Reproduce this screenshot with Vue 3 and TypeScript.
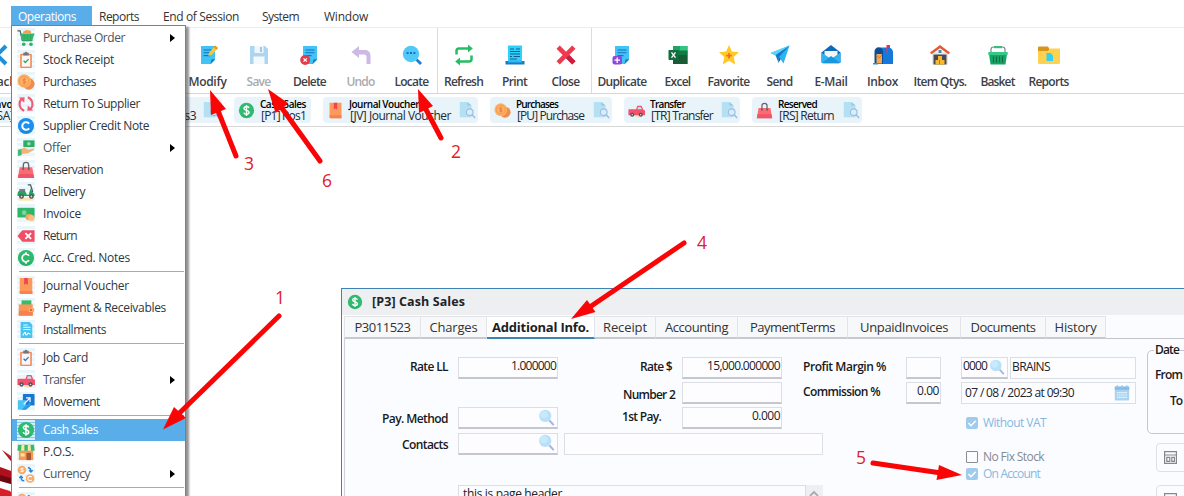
<script setup lang="ts">
import type { Directive } from 'vue'

// Tunes letter spacing so that a label takes the given width in pixels.
const vFit: Directive<HTMLElement, number | undefined> = {
  mounted(el, { value }) {
    const count = (el.textContent ?? '').trim().length
    if (!value || !count) return
    const range = document.createRange()
    range.selectNodeContents(el)
    el.style.letterSpacing = `${(value - range.getBoundingClientRect().width) / count}px`
  },
}

const clipboard = (tick: string) => `<rect x="3.5" y="3" width="13" height="16" rx="1.2" fill="#f28a55"/><rect x="5.3" y="4.8" width="9.4" height="12.6" fill="#fbf7f5"/><path d="M7 2h1.5a1.6 1.6 0 0 1 3 0H13v3H7z" fill="#72777f"/><path d="M7.3 10.8l2 2 3.6-3.8" fill="none" stroke="${tick}" stroke-width="1.4"/>`
const coin = (mark: string, body: string) => `<circle cx="10" cy="10" r="9" fill="${body}"/><path d="M3 15a9 9 0 0 0 14 0" fill="#000" opacity=".06"/>${mark}`
const dollar = `<path d="M13 7.2C12.600 5.900 11.400 5.400 10 5.400C8.300 5.400 7.100 6.200 7.100 7.600C7.100 10.500 13 9.100 13 12.200C13 13.700 11.700 14.500 10 14.500C8.300 14.500 7.200 13.700 6.900 12.400M10 3.600V16.400" fill="none" stroke="#fff" stroke-width="1.700"/>`
const note = `<path d="M3 1h14v14l-4 4H3z" fill="#43c3f5"/><path d="M12.500 19l1-4.500L17 14z" fill="#1573c4"/><path d="M5.500 5h9M5.500 7.800h9M5.500 10.600h6" stroke="#1573c4" stroke-width="1.100"/>`
const coins = `<circle cx="13" cy="12" r="6.500" fill="#f08c4c"/><circle cx="8" cy="9" r="7.500" fill="#ffb367"/><circle cx="8" cy="9" r="5.300" fill="none" stroke="#f0914e"/><path d="M9.800 7.300c-.8-1-3.400-.8-3.400.6 0 1.600 3.500.8 3.500 2.400 0 1.500-2.700 1.500-3.600.3M8 5.500v7" fill="none" stroke="#e67c3a"/>`
const truck = `<circle cx="12" cy="13" r="5.500" fill="#ffe3b5"/><path d="M1 8.500h8.500L11 4.500h5l2 4.500 2 1v5.500H.5V9.500z" fill="#f4516c"/><path d="M11 8.500l1-2.700h3l1.300 2.700z" fill="#bfe6fa"/><circle cx="5" cy="15" r="2.400" fill="#50505c"/><circle cx="15" cy="15" r="2.400" fill="#50505c"/><circle cx="5" cy="15" r=".9" fill="#ddd"/><circle cx="15" cy="15" r=".9" fill="#ddd"/>`
const bag = `<path d="M3 7h14l2 12H1z" fill="#fb6b70"/><path d="M1.800 14.500h16.400l.8 4.500H1z" fill="#ee5569"/><path d="M7 9V4.500a3 3 0 0 1 6 0V9" fill="none" stroke="#6a6470" stroke-width="1.500"/><circle cx="7" cy="9" r="1.200" fill="#6a6470"/><circle cx="13" cy="9" r="1.200" fill="#6a6470"/>`
const book = `<path d="M3 1h14v18H4.500A1.500 1.500 0 0 1 3 17.500z" fill="#fd9a5a"/><path d="M3 15.500h14V19H4.500A1.500 1.500 0 0 1 3 17.500z" fill="#f8814f"/><path d="M8 1h4v8l-2-1.700L8 9z" fill="#ee4257"/>`

const icons: Record<string, string> = {
  cart: `<path d="M.5 2h3l2.500 11h11" fill="none" stroke="#4a5662" stroke-width="1.300"/><path d="M3.500 5h16l-2.500 8H5.500z" fill="#35b86b"/><path d="M6.500 3l4-2 5 1v3H7z" fill="#ef9f57"/><path d="M8 6.500v5M11.500 6.500v5M15 6.500v5" stroke="#2aa35b" stroke-width=".8"/><circle cx="7.500" cy="17" r="2" fill="#2eb364"/><circle cx="15.500" cy="17" r="2" fill="#2eb364"/>`,
  receipt: clipboard('#27a567'),
  job: clipboard('#2678e5'),
  coins,
  swap: `<path d="M8 17.500A8 8 0 0 1 5 4.500M12 2.500a8 8 0 0 1 3 13" fill="none" stroke="#f05d72" stroke-width="2.300"/><path d="M2 2.800l6.500-.3-.5 6zM18 17.300l-6.500.3.5-6z" fill="#f05d72"/>`,
  creditBlue: coin('<path d="M13.500 7.300a4.300 4.300 0 1 0 0 5.400" fill="none" stroke="#fff" stroke-width="2.200"/>', '#1c8ff0'),
  creditGreen: coin('<path d="M13.300 7.500a4.200 4.200 0 1 0 0 5M10 3.500v3M10 13.500v3" fill="none" stroke="#fff" stroke-width="1.900"/>', '#2dba6c'),
  dollar: coin(dollar, '#30bb70'),
  offer: `<path d="M7 1.500h12.500V9H7z" fill="#2dae66"/><circle cx="13.200" cy="5.200" r="2" fill="#95dfb0"/><path d="M4.500 11l4-1.500 4 2.500 6-1.500c1 .6.500 1.400 0 1.700L12 16l-5 .5-2.500 1z" fill="#f5b377"/><path d="M1 12l4-1v7l-4 1z" fill="#44b972"/>`,
  bag,
  scooter: `<path d="M12 2h3l2.500 8" fill="none" stroke="#4a5662" stroke-width="1.400"/><path d="M2 18h16" stroke="#ffe2a8" stroke-width="3"/><path d="M2 9h7l2 4h2l2-7 3 5c1.200.4 1.700 2 1.500 3.500H.5C.5 11.500 1 10 2 9z" fill="#27a25c"/><path d="M2.500 6.800H9v2H2.500z" fill="#65717b"/><circle cx="5" cy="15" r="2.600" fill="#49505a"/><circle cx="16" cy="15" r="2.600" fill="#49505a"/><circle cx="5" cy="15" r="1" fill="#ddd"/><circle cx="16" cy="15" r="1" fill="#ddd"/>`,
  invoice: `<rect x=".5" y="3" width="19" height="11" rx="1" fill="#2fb66b"/><circle cx="8" cy="8.500" r="2.600" fill="#7bd69c"/><ellipse cx="13.500" cy="13.500" rx="4.200" ry="3.400" fill="#f5a55f"/><ellipse cx="16" cy="14.500" rx="3.500" ry="3.300" fill="#ffbf80"/>`,
  back: `<path d="M6 3.500h13.500v13H6L.5 10z" fill="#f34d66"/><path d="M9.300 6.800l6.400 6.400M15.700 6.800l-6.400 6.400" stroke="#fff" stroke-width="2"/>`,
  book,
  wallet: `<path d="M5 1.500h11V8H5z" fill="#35bd6d"/><path d="M2 6h15.500v12.500H2z" fill="#fd9654"/><path d="M2 13h15.500v5.500H2z" fill="#f6824b"/><path d="M13 10h6v4.500h-6z" fill="#ffac70"/><circle cx="15.500" cy="12.200" r="1" fill="#b25224"/>`,
  install: `<path d="M4 1h10l3 3v15H4z" fill="#46c3f0"/><path d="M7 4.500h5M7 7h8M7 9.500h8" stroke="#fff"/><path d="M6.500 16c2-4 3-4 3-2s2 2 2.500 0 1.500 1 3 .500" fill="none" stroke="#fff" stroke-width="1.200"/>`,
  truck,
  move: `<rect x="6.500" y="1" width="13" height="13" rx="1" fill="#1976d2"/><path d="M1 8h9v10.500H1z" fill="#49c4f4"/><path d="M5 18.500l10-9v5l-5 4z" fill="#2a9be6"/><path d="M7.500 12.500l6.500-6.500M10 5.500h4.500V10" fill="none" stroke="#fff" stroke-width="1.300"/>`,
  store: `<path d="M2 8h16v11H2z" fill="#f49a54"/><path d="M10.500 11h5v8h-5z" fill="#a7562f"/><path d="M4 11.500h4.500v3.500H4z" fill="#ffe0aa"/><path d="M1 2h18l.500 6.500h-19z" fill="#35bb69"/><path d="M5 2h3.200v6.500H4.500zM12 2h3l.600 6.500H12z" fill="#ffe4a2"/>`,
  currency: `<circle cx="5.500" cy="5.500" r="4.800" fill="#fbaa65"/><circle cx="14.500" cy="15" r="4.800" fill="#fbaa65"/><path d="M7.200 4c-1-.800-3-.500-2.800.700.200 1 2.500.6 2.600 1.800 0 1.200-2 1.300-2.900.3M16.300 13.500a2.400 2.400 0 1 0 0 3" fill="none" stroke="#fff" stroke-width="1.200"/><path d="M12 3c2.500 0 3.500 1 3.500 4M13.500 5.800l2 2 2-2M8 17.500c-2.500 0-3.500-1-3.500-4M2.500 14.500l2-2 2 2" fill="none" stroke="#2683da" stroke-width="1.500"/>`,
  prev: `<path d="M16 1L7 10l9 9" fill="none" stroke="#1d91d8" stroke-width="4"/>`,
  modify: `${note}<path d="M11 8L17 .500l3 2.500-6.500 7-3.300.800z" fill="#ffc531"/><path d="M17 .500l3 2.500-1.500 1.800-3-2.600z" fill="#e49b16"/>`,
  save: `<path d="M1 1h15l3 3v15H1z" fill="#aed5ef"/><path d="M5.500 1h9v7h-9z" fill="#eef7fc"/><path d="M11 2h2v5h-2z" fill="#a3c8e1"/><path d="M4.500 11.500h11V19h-11z" fill="#f4f9fc"/>`,
  remove: `${note}<circle cx="5.200" cy="15" r="5" fill="#e63b49"/><path d="M3.500 13.300l3.400 3.400M6.900 13.300l-3.400 3.400" stroke="#fff" stroke-width="1.200"/>`,
  undo: `<path d="M.5 7L8 1v4h6c3.500 0 5.500 2.500 5.500 6v8h-4v-7c0-1.700-.8-2.600-2.500-2.600H8V13z" fill="#cdb9e6"/>`,
  locate: `<path d="M14.500 14.500l4.500 4.500" stroke="#1c7fd0" stroke-width="2.800"/><circle cx="9" cy="9" r="8.200" fill="#51c9f8"/><path d="M4.600 8h2M8 8h2M11.400 8h2" stroke="#1572b9" stroke-width="2"/>`,
  refresh: `<path d="M2.500 9.500V6c0-1.700.8-2.500 2.500-2.500h10M17.500 10.500V14c0 1.700-.8 2.500-2.500 2.500H5" fill="none" stroke="#25bd63" stroke-width="2.500"/><path d="M14-.5l4.800 4-4.800 4zM6 12.500l-4.800 4 4.800 4z" fill="#25bd63"/>`,
  print: `<path d="M3 .5h14V17H3z" fill="#2bd3fa"/><path d="M.5 16h19v3.500H.5z" fill="#1878c9"/><path d="M3 15.500h14v2H3z" fill="#2bb9ef"/><path d="M5 4h4M11 4h4M5 6.500h10M5 9h10M5 11.500h2M8.500 11.500H15M5 14h7" stroke="#19588f" stroke-width="1.100"/>`,
  close: `<path d="M3.800.500L10 6.800l6.200-6.300 3.300 3.300L13.300 10l6.200 6.200-3.300 3.300L10 13.200l-6.200 6.300-3.300-3.300L6.700 10 .500 3.800z" fill="#ee3a4c"/><path d="M13.300 10l6.200 6.200-3.300 3.300L10 13.200z" fill="#c91f3f"/>`,
  duplicate: `${note}<rect x=".5" y="11" width="9.500" height="8.500" rx="2" fill="#8d48dd"/><path d="M5.200 12.500v5.500M2.500 15.200H8" stroke="#fff" stroke-width="1.300"/>`,
  excel: `<rect x="5" y="1" width="14.500" height="18" fill="#21a366"/><path d="M5 10h14.500v9H5z" fill="#185c37"/><path d="M12 1h7.500v9H12z" fill="#33c481"/><path d="M5 5.500h14.500V10H5z" fill="#107c41"/><rect x=".5" y="5" width="10" height="10" rx=".8" fill="#0e703c"/><path d="M3.500 7.300l4 5.400M7.500 7.300l-4 5.400" stroke="#fff" stroke-width="1.300"/>`,
  star: `<path d="M10 0l2.900 6.500 7.100.800-5.300 4.800L16.200 19.500 10 15.700 3.800 19.500l1.500-7.400L0 7.300l7.100-.800z" fill="#ffc928"/><path d="M10 8v5.500M7.200 10.700h5.600" stroke="#f0702a" stroke-width="1.700"/>`,
  send: `<path d="M.5 8L19.500.5l-6 18L9 12z" fill="#27b6f2"/><path d="M19.500.5L9 12l-.5 6-3-8z" fill="#1779c5"/><path d="M19.500.5L5.500 10 .5 8z" fill="#5bd3fb"/><path d="M8.500 18l2.200-4L9 12z" fill="#0e5f9e"/>`,
  mail: `<path d="M.5 7.500L10 0l9.500 7.500v10.200H.500z" fill="#0f68bb"/><path d="M3.500 6h13v7.500h-13z" fill="#f3f8fc"/><path d="M.5 7.500L10 14l9.500-6.500v9.200a1.800 1.800 0 0 1-1.800 1.800H2.300A1.800 1.800 0 0 1 .5 16.700z" fill="#31b3f0"/><path d="M1 18l9-7 9 7z" fill="#1b95de"/>`,
  inbox: `<path d="M4 2.500h11c3 0 5 2 5 5V19H4z" fill="#1579dc"/><path d="M1.500 19V7c0-3 1.500-4.500 4.200-4.500S10 4 10 7v12z" fill="#0b4e93"/><path d="M3.500 9H9v9.500H3.500z" fill="#f7a84e"/><path d="M3.500 10l2.700 3L9 10" fill="none" stroke="#d7792a"/><path d="M13.500 9V0H17v3h-2v6z" fill="#e33550"/><path d="M0 18h5v1.500H0z" fill="#2691e5"/>`,
  warehouse: `<path d="M2 7h16v12.500H2z" fill="#e9e9ec"/><path d="M3.500 9.500h13v10h-13z" fill="#484b55"/><path d="M0 7.500L10 0l10 7.500-1.500 1.800L10 3.200 1.500 9.300z" fill="#e35b32"/><path d="M8.500 5h3v3h-3z" fill="#4286bb"/><path d="M5.500 15h4v4.500h-4zM10 15h4.500v4.500H10zM8 11h4v4H8z" fill="#f9b929"/>`,
  basket: `<path d="M3 9V4.500C3 3 3.800 2 5.500 2h9C16.200 2 17 3 17 4.500V9" fill="none" stroke="#7d8792" stroke-width="1.200"/><path d="M6 1h8v2.200H6z" fill="#37bf7b"/><path d="M1 9h18l-1.500 10.500h-15z" fill="#17a565"/><path d="M.3 7h19.400v3H.3z" fill="#35c985"/><path d="M5.500 11.500v6M8.500 11.500v6M11.500 11.500v6M14.500 11.500v6" stroke="#0b6d41" stroke-width="1.100"/>`,
  folder: `<path d="M-1 2.500a1 1 0 0 1 1-1h9L10.500 4v3H-1z" fill="#d8951b"/><path d="M-1 6H9l2-2.500h10v14a1.500 1.500 0 0 1-1.500 1.500h-19A1.500 1.500 0 0 1-1 17.500z" fill="#ffd151"/><path d="M7.500 8h4l2.500 2.500V16H7.500z" fill="#35cff0"/>`,
  preview: `<path d="M2 1h8.500L15 5v13H2z" fill="#b5e0f4"/><path d="M10.500 1L15 5h-4.500z" fill="#8ecbea"/><circle cx="13" cy="12.500" r="3.700" fill="#dcedf8" stroke="#98bfe3" stroke-width="1.300"/><path d="M15.700 15.300l3.300 3.700" stroke="#98bfe3" stroke-width="1.700"/>`,
  lens: `<path d="M13 13l5.500 6" stroke="#a2b8e6" stroke-width="2.400"/><circle cx="8.500" cy="8" r="7.200" fill="#b8e0f8"/><circle cx="7" cy="6.500" r="4.500" fill="#c8e9fb"/>`,
  calendar: `<rect x="1" y="2" width="18" height="17.500" rx="1" fill="#a9d3f1"/><path d="M1 2h18v4H1z" fill="#86bde8"/><path d="M4 0v4M10 0v4M16 0v4" stroke="#8fc3ea" stroke-width="1.200"/><path d="M4 9.500h12M4 12.500h12M4 15.500h12" stroke="#fff" stroke-width="1.400" stroke-dasharray="1.500 1.100"/>`,
}

interface MenuRow { icon?: string; text?: string; w?: number; sub?: boolean; active?: boolean }
const menu: MenuRow[] = [
  { icon: 'cart', text: 'Purchase Order', w: 82, sub: true },
  { icon: 'receipt', text: 'Stock Receipt', w: 71 },
  { icon: 'coins', text: 'Purchases', w: 53 },
  { icon: 'swap', text: 'Return To Supplier', w: 97 },
  { icon: 'creditBlue', text: 'Supplier Credit Note', w: 106 },
  { icon: 'offer', text: 'Offer', w: 28, sub: true },
  { icon: 'bag', text: 'Reservation', w: 60 },
  { icon: 'scooter', text: 'Delivery', w: 42 },
  { icon: 'invoice', text: 'Invoice', w: 38 },
  { icon: 'back', text: 'Return', w: 34 },
  { icon: 'creditGreen', text: 'Acc. Cred. Notes', w: 87 },
  {},
  { icon: 'book', text: 'Journal Voucher', w: 86 },
  { icon: 'wallet', text: 'Payment & Receivables', w: 123 },
  { icon: 'install', text: 'Installments', w: 63 },
  {},
  { icon: 'job', text: 'Job Card', w: 45 },
  { icon: 'truck', text: 'Transfer', w: 42, sub: true },
  { icon: 'move', text: 'Movement', w: 57 },
  {},
  { icon: 'dollar', text: 'Cash Sales', w: 55, active: true },
  { icon: 'store', text: 'P.O.S.', w: 31 },
  { icon: 'currency', text: 'Currency', w: 47, sub: true },
  {},
  { icon: 'currency', text: '' },
]

interface Tool { icon: string; text: string; w: number; cell: number; off?: boolean }
const toolGroups: Tool[][] = [
  [
    { icon: 'modify', text: 'Modify', w: 38, cell: 51 },
    { icon: 'save', text: 'Save', w: 24, cell: 51, off: true },
    { icon: 'remove', text: 'Delete', w: 33, cell: 51 },
    { icon: 'undo', text: 'Undo', w: 28, cell: 51, off: true },
    { icon: 'locate', text: 'Locate', w: 34, cell: 51 },
  ],
  [
    { icon: 'refresh', text: 'Refresh', w: 39, cell: 51 },
    { icon: 'print', text: 'Print', w: 25, cell: 51 },
    { icon: 'close', text: 'Close', w: 28, cell: 51 },
  ],
  [
    { icon: 'duplicate', text: 'Duplicate', w: 49, cell: 60 },
    { icon: 'excel', text: 'Excel', w: 26, cell: 51 },
    { icon: 'star', text: 'Favorite', w: 42, cell: 51 },
    { icon: 'send', text: 'Send', w: 26, cell: 51 },
    { icon: 'mail', text: 'E-Mail', w: 33, cell: 52 },
    { icon: 'inbox', text: 'Inbox', w: 31, cell: 51 },
    { icon: 'warehouse', text: 'Item Qtys.', w: 53, cell: 64 },
    { icon: 'basket', text: 'Basket', w: 34, cell: 51 },
    { icon: 'folder', text: 'Reports', w: 40, cell: 51 },
  ],
]

const chips = [
  { icon: 'invoice', title: 'Invoice', tw: 34, text: '[SA] Invoice', w: 60, cell: 144, look: true },
  { icon: 'dollar', title: 'Cash', tw: 20, text: '[P3] Pos3', w: 47, cell: 100, look: true },
  { icon: 'dollar', title: 'Cash Sales', tw: 46, text: '[P1] Pos1', w: 45, cell: 77, look: false },
  { icon: 'book', title: 'Journal Voucher', tw: 70, text: '[JV] Journal Voucher', w: 101, cell: 155, look: true },
  { icon: 'coins', title: 'Purchases', tw: 42, text: '[PU] Purchase', w: 67, cell: 122, look: true },
  { icon: 'truck', title: 'Transfer', tw: 35, text: '[TR] Transfer', w: 62, cell: 116, look: true },
  { icon: 'bag', title: 'Reserved', tw: 39, text: '[RS] Return', w: 55, cell: 110, look: true },
]

const tabs = [
  { text: 'P3011523', w: 56, cell: 77 },
  { text: 'Charges', w: 48, cell: 66 },
  { text: 'Additional Info.', w: 97, cell: 108, active: true },
  { text: 'Receipt', w: 44, cell: 61 },
  { text: 'Accounting', w: 63, cell: 82 },
  { text: 'PaymentTerms', w: 85, cell: 110 },
  { text: 'UnpaidInvoices', w: 88, cell: 113 },
  { text: 'Documents', w: 65, cell: 85 },
  { text: 'History', w: 42, cell: 60 },
]

const top = [
  { text: 'Operations', w: 58, cell: 81, active: true },
  { text: 'Reports', w: 40, cell: 64 },
  { text: 'End of Session', w: 76, cell: 99 },
  { text: 'System', w: 37, cell: 62 },
  { text: 'Window', w: 44, cell: 60 },
]

// Callout arrows: tail, tip and the two barbs of the head.
const arrows = [
  { n: '1', x: 275, y: 304, tail: [279, 316], tip: [163, 429.5], a: [174, 407], b: [186, 418] },
  { n: '2', x: 451, y: 158, tail: [441, 138], tip: [418, 89], a: [419, 113], b: [433, 106] },
  { n: '3', x: 244, y: 170, tail: [236, 156], tip: [210, 90], a: [211, 115], b: [226, 109] },
  { n: '4', x: 697, y: 249, tail: [684, 243], tip: [571, 319], a: [587, 300], b: [595.5, 312] },
  { n: '5', x: 856, y: 464, tail: [873, 463], tip: [962, 475], a: [939, 465], b: [936.5, 480] },
  { n: '6', x: 322, y: 187, tail: [320, 161], tip: [268, 89], a: [275.5, 113], b: [288.500, 103.500] },
]
</script>

<template>
  <div class="app">
    <nav class="menubar">
      <span v-for="t in top" :key="t.text" class="top" :class="{ active: t.active }" :style="{ width: t.cell + 'px' }">
        <span v-fit="t.w">{{ t.text }}</span>
      </span>
    </nav>

    <div class="toolbar">
      <div class="tool first">
        <svg viewBox="0 0 20 20" v-html="icons.prev" />
        <span v-fit="27">Back</span>
      </div>
      <div v-for="(g, i) in toolGroups" :key="i" class="group">
        <div v-for="t in g" :key="t.text" class="tool" :class="{ off: t.off }" :style="{ width: t.cell + 'px' }">
          <svg viewBox="0 0 20 20" v-html="icons[t.icon]" />
          <span v-fit="t.w">{{ t.text }}</span>
        </div>
      </div>
    </div>

    <div class="chips">
      <div v-for="c in chips" :key="c.text" class="chip" :style="{ width: c.cell + 'px' }">
        <svg viewBox="0 0 20 20" v-html="icons[c.icon]" />
        <div class="chip-text">
          <b><span v-fit="c.tw">{{ c.title }}</span></b>
          <div><span v-fit="c.w">{{ c.text }}</span></div>
        </div>
        <svg v-if="c.look" class="look" viewBox="0 0 20 20" v-html="icons.preview" />
      </div>
    </div>

    <main class="desk">
      <svg class="mascot" viewBox="0 0 14 50" width="14" height="50">
        <path d="M2 4l12 8v7z" fill="#a81220" />
        <path d="M3 4l11 10v1z" fill="#e0606a" />
        <path d="M0 21l14 5v10L0 32z" fill="#b0101d" />
        <path d="M0 29l14 4v6L0 35z" fill="#6d0710" />
        <path d="M0 42l10 3 4 5H0z" fill="#d8202d" />
      </svg>
      <section class="window">
        <header>
          <svg viewBox="0 0 20 20" v-html="icons.dollar" />
          <span v-fit="93">[P3] Cash Sales</span>
        </header>
        <div class="tabs">
          <div v-for="t in tabs" :key="t.text" class="tab" :class="{ active: t.active }" :style="{ width: t.cell + 'px' }">
            <span v-fit="t.w">{{ t.text }}</span>
          </div>
          <div class="rest" />
        </div>
        <div class="body">
          <div class="left">
            <div class="grid">
              <label class="c1 r1"><span v-fit="38">Rate LL</span></label>
              <div class="field c2 r1"><span v-fit="45">1.000000</span></div>
              <label class="c1 r3 low"><span v-fit="66">Pay. Method</span></label>
              <div class="field c2 r3"><svg viewBox="0 0 20 20" v-html="icons.lens" /></div>
              <label class="c1 r4 low"><span v-fit="46">Contacts</span></label>
              <div class="field c2 r4"><svg viewBox="0 0 20 20" v-html="icons.lens" /></div>
              <label class="c3 r1"><span v-fit="32">Rate $</span></label>
              <div class="field c4 r1"><span v-fit="73">15,000.000000</span></div>
              <label class="c3 r2 number"><span v-fit="52">Number 2</span></label>
              <div class="field c4 r2" />
              <label class="c3 r3 pay"><span v-fit="39">1st Pay.</span></label>
              <div class="field c4 r3"><span v-fit="28">0.000</span></div>
              <label class="c5 r1 start"><span v-fit="83">Profit Margin %</span></label>
              <div class="field c6 r1" />
              <label class="c5 r2 start"><span v-fit="77">Commission %</span></label>
              <div class="field c6 r2"><span v-fit="22">0.00</span></div>
              <div class="field flat wide r4" />
            </div>
            <div class="memo">
              <div class="memo-text"><span v-fit="99">this is page header</span></div>
              <div class="scroll"><svg viewBox="0 0 10 8" width="10" height="8"><path d="M1 6l4-4 4 4" fill="none" stroke="#aaa" stroke-width="1.800" /></svg></div>
            </div>
          </div>

          <div class="side">
            <div class="row">
              <div class="field code"><span v-fit="24">0000</span><svg viewBox="0 0 20 20" v-html="icons.lens" /></div>
              <div class="field flat name"><span v-fit="38">BRAINS</span></div>
            </div>
            <div class="field flat date"><span v-fit="109">07 / 08 / 2023 at 09:30</span><svg viewBox="0 0 20 20" v-html="icons.calendar" /></div>
            <div class="check on vat"><i><svg viewBox="0 0 12 12"><path d="M2.500 6l2.500 2.700 4.700-5" /></svg></i><span v-fit="63">Without VAT</span></div>
            <div class="check fix"><i /><span v-fit="61">No Fix Stock</span></div>
            <div class="check on acc"><i><svg viewBox="0 0 12 12"><path d="M2.500 6l2.500 2.700 4.700-5" /></svg></i><span v-fit="57">On Account</span></div>
          </div>

          <div class="range">
            <fieldset>
              <legend><span v-fit="24">Date</span></legend>
              <p><span v-fit="27">From</span></p>
              <p class="to"><span v-fit="12">To</span></p>
            </fieldset>
            <div v-for="k in 2" :key="k" class="btn">
              <svg viewBox="0 0 13 13" width="13" height="13"><path d="M.600.600h11.800v11.800H.600zM.600 4h11.800M2.800 6.300h3v4h-3zM7.800 6.300h2.600v4H7.800z" /></svg>
              <span>C</span>
            </div>
          </div>
        </div>
      </section>
    </main>

    <div class="menu">
      <template v-for="(m, i) in menu" :key="i">
        <div v-if="!m.icon" class="sep" />
        <div v-else class="item" :class="{ active: m.active, sub: m.sub }">
          <span class="pic"><svg viewBox="0 0 20 20" v-html="icons[m.icon]" /></span>
          <span v-fit="m.w">{{ m.text }}</span>
          <i v-if="m.sub" />
        </div>
      </template>
    </div>

    <svg class="callouts" width="1184" height="496" viewBox="0 0 1184 496">
      <g v-for="a in arrows" :key="a.n">
        <line :x1="a.tail[0]" :y1="a.tail[1]" :x2="(a.a[0] + a.b[0]) / 2" :y2="(a.a[1] + a.b[1]) / 2" />
        <polygon :points="`${a.tip} ${a.a} ${a.b}`" />
        <text :x="a.x" :y="a.y">{{ a.n }}</text>
      </g>
    </svg>
  </div>
</template>

<style>
body { margin: 0; background: #fff; }
</style>

<style scoped>
.app {
  position: relative;
  width: 1184px;
  height: 496px;
  overflow: hidden;
  background: #fff;
  color: #222;
  font: 12px/16px 'Open Sans', 'Noto Sans', sans-serif;
  white-space: nowrap;
  display: flex;
  flex-direction: column;
}
.app * { box-sizing: border-box; }
svg { display: block; flex: none; overflow: visible; }

.menubar {
  flex: none;
  height: 28px;
  padding: 6px 0 0 11px;
  display: flex;
  border-bottom: 1px solid #efe9ee;
}
.top { height: 22px; padding: 3px 0 0 7px; color: #333; }
.top.active { background: #59aeea; color: #fff; }

.toolbar {
  flex: none;
  height: 66px;
  display: flex;
  border-bottom: 1px solid #d7d7d7;
}
.tool {
  display: flex;
  flex-direction: column;
  align-items: center;
  padding-top: 17px;
  font-weight: 600;
  color: #3d4147;
}
.tool svg { width: 20px; height: 20px; margin-bottom: 9px; }
.tool.first { width: 51px; margin: 0 154px 0 -23px; }
.tool.first svg { margin-left: -6px; }
.tool.off { color: #a9abae; }
.group { display: flex; }
.group + .group { border-left: 1px solid #dcdcdc; }

.chips {
  flex: none;
  height: 33px;
  padding-top: 3px;
  display: flex;
  gap: 12px;
  border-bottom: 1px solid #d7d7d7;
}
.chip {
  flex: none;
  height: 26px;
  border-radius: 4px;
  background: #e9f3fa;
  display: flex;
  align-items: center;
  padding: 0 2px 0 4px;
}
.chip:first-child { margin-left: -34px; }
.chip svg { width: 17px; height: 17px; }
.chip-text { margin-left: 5px; flex: 1; line-height: 12px; color: #26292e; }
.chip-text b { display: block; font-size: 10px; line-height: 12px; font-weight: 600; color: #000; }
.chip-text div { padding-left: 1px; font-size: 12px; }
.chip .look { width: 18px; height: 18px; }

.desk { flex: 1; min-height: 0; position: relative; padding: 161px 0 0 341px; }
.mascot { position: absolute; left: 0; bottom: 0; }

.window {
  width: 900px;
  height: 300px;
  border: 1px solid #3f82b4;
  border-right: 0;
  background: #fbfcff;
}
.window header {
  height: 26px;
  background: #eeeff0;
  display: flex;
  align-items: center;
  padding-left: 5px;
  font-size: 12.5px;
  font-weight: 700;
  color: #20242a;
}
.window header svg { width: 16px; height: 16px; margin-right: 9px; }

.tabs {
  height: 23px;
  margin: 1px 0 0 2px;
  display: flex;
  font-size: 13px;
  color: #333;
}
.tab {
  flex: none;
  text-align: center;
  padding-top: 2px;
  border: 1px solid #e3e4ea;
  border-left: 0;
  border-bottom: 2px solid #c8c9cf;
  background: #f7f8fa;
}
.tab:first-child { border-left: 1px solid #e3e4ea; }
.tab.active { background: #fff; font-weight: 700; color: #1b1e22; border-bottom-color: #3d84b4; }
.rest { flex: 1; border-bottom: 1px solid #c3c4ca; }

.body {
  margin-left: 2px;
  height: 240px;
  border-left: 1px solid #cfd0d8;
  display: flex;
}
.left { width: 616px; padding-top: 18px; }
.grid {
  display: grid;
  grid-template-columns: 113px 100px 124px 100px 124px 35px;
  grid-template-rows: repeat(4, 22px);
  row-gap: 3.200px;
}
.c1 { grid-column: 1; }
.c2 { grid-column: 2; }
.c3 { grid-column: 3; }
.c4 { grid-column: 4; }
.c5 { grid-column: 5; }
.c6 { grid-column: 6; }
.r1 { grid-row: 1; }
.r2 { grid-row: 2; }
.r3 { grid-row: 3; }
.r4 { grid-row: 4; }
.wide { grid-column: 3 / 6; margin: 0 83px 0 6px; }
label { text-align: right; padding: 2px 10px 0 0; font-weight: 600; color: #17191c; }
label.low { padding-top: 4px; }
label.number { padding: 5px 7px 0 0; }
label.pay { padding-right: 21px; }
label.start { text-align: left; padding-left: 21px; }
.field {
  border: 1px solid #dddee4;
  border-bottom: 2px solid #c6c7ce;
  background: #fdfdff;
  display: flex;
  align-items: center;
  justify-content: flex-end;
  padding: 0 1px 3px 0;
  color: #202327;
  font-size: 12px;
}
.field.flat { border-bottom: 1px solid #dddee4; }
.field svg { width: 17px; height: 17px; margin: 2px 1px 0 0; }

.memo { margin: 30px 0 0 113px; display: flex; width: 365px; height: 60px; }
.memo-text { width: 348px; border: 1px solid #dddee4; padding-left: 4px; }
.scroll { width: 17px; background: #eeeff1; padding: 5px 3px; }

.side { width: 175px; padding-top: 18px; }
.row { display: flex; gap: 2px; }
.side .field { height: 22px; justify-content: flex-start; padding-left: 1px; }
.side .code { width: 47px; }
.side .code svg { margin-left: 2px; width: 16px; height: 16px; }
.side .name { width: 126px; }
.side .date { margin-top: 3px; padding-left: 3px; justify-content: space-between; padding-right: 3px; padding-bottom: 0; }
.side .date svg { width: 16px; height: 16px; margin: 0 2px 0 0; }
.check { display: flex; align-items: center; height: 16px; padding-left: 5px; color: #85898f; }
.check i { width: 12px; height: 12px; margin-right: 5px; border: 1px solid #898d94; border-radius: 1px; }
.check.on { color: #86b8df; }
.check.on i { background: #9fcbed; border: 0; border-radius: 2px; }
.check path { fill: none; stroke: #fff; stroke-width: 1.500; }
.vat { margin-top: 11px; }
.fix { margin-top: 18px; }
.acc { margin-top: 1px; }

.range { width: 90px; padding: 3px 0 0 11px; }
fieldset {
  margin: 0;
  height: 92px;
  border: 1px solid #c5c7cf;
  border-radius: 5px;
  padding: 0 0 0 7px;
  font-weight: 600;
  color: #17191c;
}
legend { padding: 0 1px; margin-left: -1px; }
fieldset p { margin: 9px 0 0; }
fieldset p.to { margin: 10px 0 0 15px; }
.btn {
  height: 29px;
  margin: 9px 0 13px 9px;
  border: 1px solid #dfe0e6;
  border-radius: 4px;
  padding: 7px;
  display: flex;
  gap: 8px;
  color: #dcc9b5;
}
.btn path { fill: none; stroke: #85878c; stroke-width: 1.200; }

.menu {
  position: absolute;
  left: 11px;
  top: 25px;
  width: 175px;
  height: 480px;
  background: #fff;
  border: 1px solid #7d7f83;
  box-shadow: 3px 2px 2px rgba(0, 0, 0, 0.42);
  padding-top: 1px;
  color: #2b3742;
}
.item { height: 22px; display: flex; align-items: center; padding-left: 5px; }
.item.sub { color: #4c545c; }
.item.active { background: #59aeea; color: #fff; }
.pic {
  width: 18px;
  height: 20px;
  margin-right: 8px;
  padding-top: 1px;
  background: repeating-linear-gradient(#e8f6fc 0 3px, #f6fcff 3px 5px);
}
.pic svg { width: 18px; height: 18px; }
.item.active .pic { background: repeating-linear-gradient(#d7f0fa 0 2px, #8bc9f0 2px 3px); }
.item i { margin-left: auto; margin-right: 10px; border: 4px solid transparent; border-left: 5px solid #000; border-right: 0; }
.sep { height: 1px; margin: 2px 1px 3px 7px; background: #a9a9ad; }

.callouts { position: absolute; left: 0; top: 0; }
.callouts line { stroke: #f90505; stroke-width: 5; stroke-linecap: round; }
.callouts polygon { fill: #f90505; }
.callouts text { fill: #e02028; font: 400 17.5px 'Open Sans', 'Noto Sans', sans-serif; }
</style>
